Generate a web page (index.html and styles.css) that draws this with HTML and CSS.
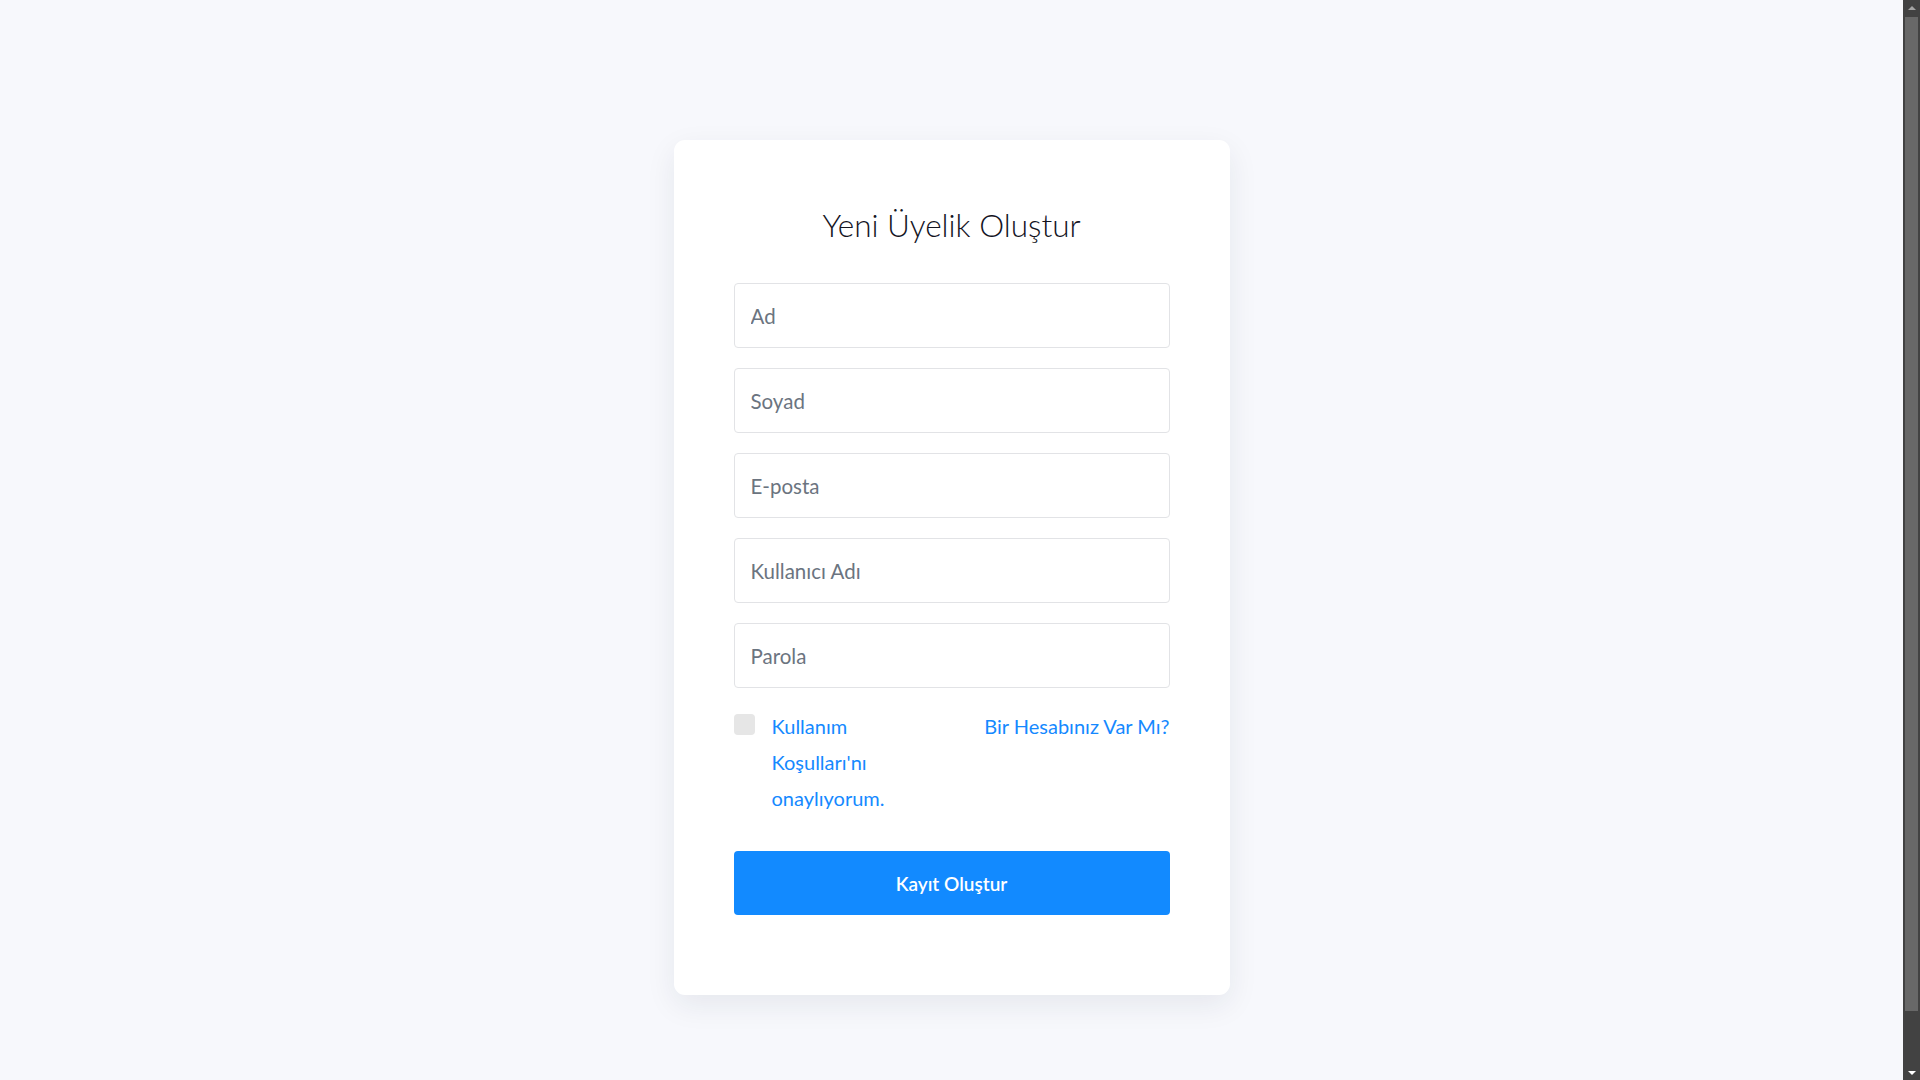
FILE: index.html
```html
<!DOCTYPE html>
<html lang="tr">
<head>
<meta charset="utf-8">
<title>Yeni Üyelik Oluştur</title>
<link rel="stylesheet" href="styles.css">
</head>
<body>
<main class="page">
  <form class="card">
    <h1 class="title">Yeni Üyelik Oluştur</h1>
    <div class="fields">
      <input class="field" type="text" placeholder="Ad">
      <input class="field" type="text" placeholder="Soyad">
      <input class="field" type="email" placeholder="E-posta">
      <input class="field" type="text" placeholder="Kullanıcı Adı">
      <input class="field" type="password" placeholder="Parola">
    </div>
    <div class="options">
      <label class="terms">
        <input class="check" type="checkbox">
        <span class="terms-text link">Kullanım Koşulları'nı onaylıyorum.</span>
      </label>
      <a class="link login" href="#">Bir Hesabınız Var Mı?</a>
    </div>
    <button class="submit" type="button">Kayıt Oluştur</button>
  </form>
</main>
<div class="scrollbar" aria-hidden="true">
  <div class="sb-btn"><span class="arrow-up"></span></div>
  <div class="sb-track"><div class="sb-thumb"></div></div>
  <div class="sb-btn"><span class="arrow-down"></span></div>
</div>
</body>
</html>
```

FILE: styles.css
```css
* {
  box-sizing: border-box;
}

html, body {
  margin: 0;
  padding: 0;
}

body {
  background: #f7f8fc;
  font-family: Lato, "Open Sans", "Liberation Sans", sans-serif;
  color: #1c1c28;
}

.page {
  display: flex;
  justify-content: center;
  padding: 140px 17px 140px 0;
}

.card {
  width: 556px;
  background: #ffffff;
  border-radius: 11px;
  padding: 67px 60px 80px;
  box-shadow: 0 10px 30px rgba(30, 35, 60, 0.08);
  display: flex;
  flex-direction: column;
}

.title {
  margin: 0 0 40px;
  text-align: center;
  font-size: 31.5px;
  line-height: 36px;
  font-weight: 300;
  color: #14141f;
}

.fields {
  display: flex;
  flex-direction: column;
  gap: 20px;
}

.field {
  height: 65px;
  width: 100%;
  border: 1px solid #e2e3e6;
  border-radius: 4px;
  padding: 0 16px;
  font-family: inherit;
  font-size: 20.5px;
  color: #333;
  background: #fff;
  outline: none;
}

.field::placeholder {
  color: #6b7480;
  opacity: 1;
}

.options {
  margin-top: 20px;
  display: flex;
  justify-content: space-between;
  align-items: flex-start;
  font-size: 20px;
  line-height: 36px;
}

.terms {
  display: flex;
  align-items: flex-start;
  gap: 17px;
  cursor: pointer;
}

.check {
  appearance: none;
  -webkit-appearance: none;
  margin: 6px 0 0;
  width: 21px;
  height: 21px;
  border-radius: 4px;
  background: #e6e6e6;
  border: none;
  flex: none;
}

.terms-text {
  width: 135px;
}

.link {
  color: #1589ff;
  text-decoration: none;
}

.submit {
  margin-top: 35px;
  height: 64px;
  width: 100%;
  border: none;
  border-radius: 4px;
  background: #128aff;
  color: #ffffff;
  font-family: inherit;
  font-size: 19px;
  font-weight: 600;
  cursor: pointer;
}

/* window scrollbar (page is taller than the viewport) */
.scrollbar {
  position: fixed;
  top: 0;
  right: 0;
  width: 17px;
  height: 100vh;
  background: #424242;
  display: flex;
  flex-direction: column;
}

.sb-btn {
  height: 17px;
  flex: none;
  display: flex;
  align-items: center;
  justify-content: center;
}

.arrow-up,
.arrow-down {
  width: 0;
  height: 0;
  border-left: 4px solid transparent;
  border-right: 4px solid transparent;
}

.arrow-up {
  border-bottom: 4px solid #a3a3a3;
  margin-top: -1px;
}

.arrow-down {
  border-top: 4px solid #ffffff;
  margin-top: 2px;
}

.sb-track {
  flex: 1;
  padding: 0 2px;
}

.sb-thumb {
  height: 994px;
  background: #686868;
}
```
